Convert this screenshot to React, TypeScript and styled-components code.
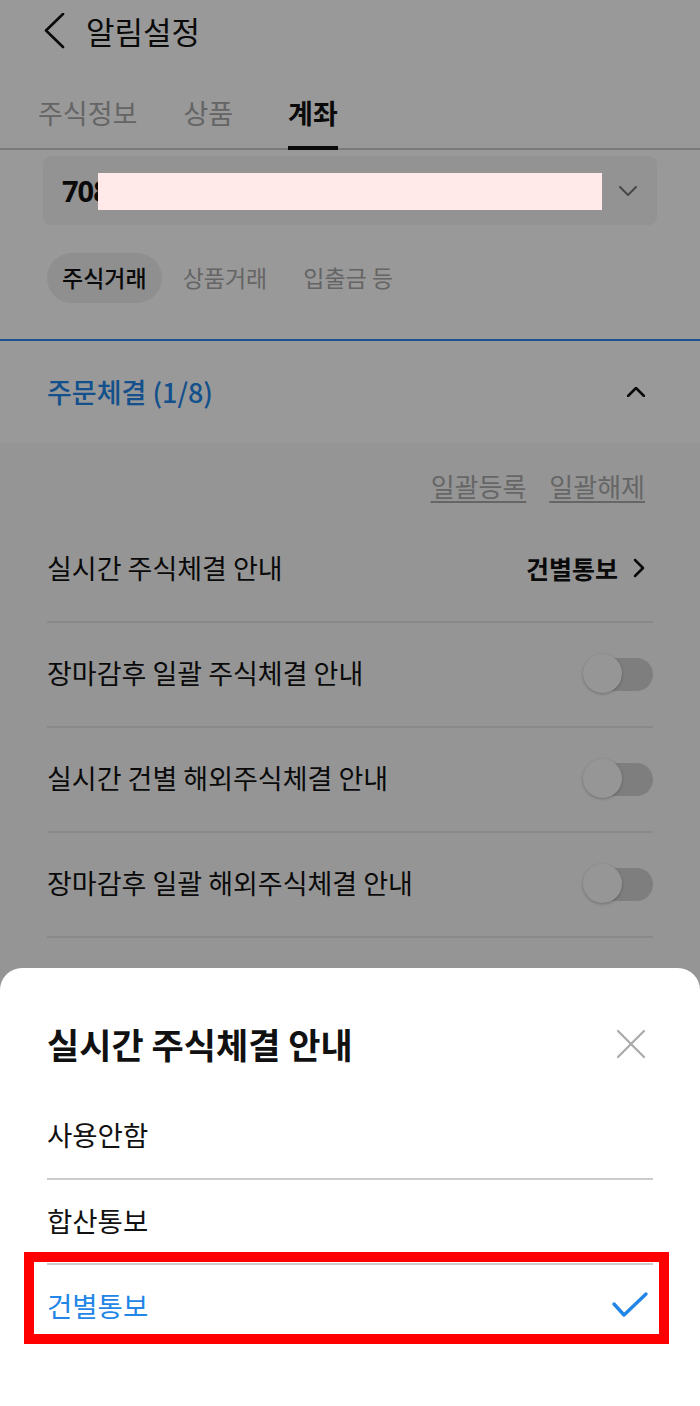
import React from "react";
import styled, { createGlobalStyle } from "styled-components";

const Global = createGlobalStyle`
  html, body { margin: 0; padding: 0; background: #ffffff; }
  body { font-family: "Noto Sans CJK KR", "Noto Sans", sans-serif; color: #111; }
  * { box-sizing: border-box; }
`;

const Page = styled.div`
  position: relative;
  width: 700px;
  height: 1406px;
  overflow: hidden;
  background: #ffffff;
`;

const Header = styled.header`
  display: flex;
  align-items: center;
  gap: 20px;
  height: 66px;
  padding: 0 0 4px 44px;
`;

const Title = styled.h1`
  margin: 0;
  font-size: 31px;
  font-weight: 400;
  line-height: 40px;
  color: #111;
`;

const TabBar = styled.nav`
  display: flex;
  align-items: flex-end;
  height: 84px;
  padding-left: 38px;
  box-shadow: inset 0 -2px 0 #cccccc;
`;

const Tab = styled.div<{ $active?: boolean; $gap: number }>`
  margin-left: ${(p) => p.$gap}px;
  font-size: 27px;
  line-height: 36px;
  padding-bottom: 15px;
  font-weight: ${(p) => (p.$active ? 700 : 400)};
  color: ${(p) => (p.$active ? "#111" : "#a8a8a8")};
  border-bottom: 4px solid ${(p) => (p.$active ? "#111" : "transparent")};
`;

const Select = styled.div`
  margin: 6px 43px 0;
  height: 69px;
  border-radius: 8px;
  background: #f5f5f5;
  display: flex;
  align-items: center;
  justify-content: space-between;
  padding: 0 20px 0 19px;
`;

const AccountNo = styled.span`
  font-family: "Noto Sans", "Noto Sans CJK KR", sans-serif;
  font-weight: 700;
  font-size: 29px;
  letter-spacing: -1px;
  color: #111;
`;

const ChipRow = styled.div`
  display: flex;
  gap: 6px;
  margin: 28px 47px 0;
`;

const Chip = styled.div<{ $active?: boolean }>`
  height: 50px;
  padding: 0 15px 3px;
  border-radius: 25px;
  display: flex;
  align-items: center;
  font-size: 23px;
  font-weight: ${(p) => (p.$active ? 500 : 400)};
  color: ${(p) => (p.$active ? "#111" : "#a8a8a8")};
  background: ${(p) => (p.$active ? "#eeeeee" : "transparent")};
`;

const SectionHeader = styled.div`
  margin-top: 36px;
  border-top: 2px solid #2f86ee;
  height: 104px;
  display: flex;
  align-items: center;
  justify-content: space-between;
  padding: 0 55px 0 47px;
`;

const SectionTitle = styled.span`
  font-size: 27px;
  font-weight: 500;
  color: #2186ea;
  padding-bottom: 2px;
`;

const SectionBody = styled.div`
  background: #f8f8f8;
  padding: 0 47px;
  min-height: 600px;
`;

const LinkRow = styled.div`
  display: flex;
  justify-content: flex-end;
  gap: 23px;
  padding: 26px 8px 0 0;
  height: 75px;
`;

const TextLink = styled.span`
  font-size: 26px;
  line-height: 34px;
  color: #ababab;
  text-decoration: underline;
  text-underline-offset: 4px;
  text-decoration-thickness: 1.5px;
`;

const Row = styled.div`
  height: 105px;
  display: flex;
  align-items: center;
  justify-content: space-between;
  padding-bottom: 4px;
  border-bottom: 2px solid #e4e4e4;
`;

const RowLabel = styled.span`
  font-size: 27px;
  color: #111;
`;

const RowValue = styled.span`
  display: flex;
  align-items: center;
  gap: 15px;
  padding-right: 8px;
  font-size: 25px;
  font-weight: 700;
  color: #111;
`;

const Toggle = styled.div`
  position: relative;
  width: 70px;
  height: 40px;
  margin-top: 2px;
`;

const Track = styled.div`
  position: absolute;
  right: 0;
  top: 4px;
  width: 56px;
  height: 33px;
  border-radius: 17px;
  background: #d2d2d2;
`;

const Knob = styled.div`
  position: absolute;
  left: 0;
  top: 0;
  width: 39px;
  height: 39px;
  border-radius: 50%;
  background: #fbfbfb;
  box-shadow: 0 1px 3px rgba(0, 0, 0, 0.25);
`;

const Dim = styled.div`
  position: absolute;
  inset: 0;
  background: rgba(0, 0, 0, 0.4);
`;

const Redaction = styled.div`
  position: absolute;
  left: 98px;
  top: 173px;
  width: 504px;
  height: 37px;
  background: #ffe9e9;
`;

const Sheet = styled.div`
  position: absolute;
  left: 0;
  right: 0;
  bottom: 0;
  height: 438px;
  background: #ffffff;
  border-radius: 22px 22px 0 0;
  padding: 54px 47px 0;
`;

const SheetHead = styled.div`
  display: flex;
  align-items: center;
  justify-content: space-between;
  height: 44px;
  margin-bottom: 27px;
`;

const SheetTitle = styled.h2`
  margin: 0;
  font-size: 35px;
  font-weight: 700;
  line-height: 44px;
  color: #111;
`;

const Option = styled.div<{ $selected?: boolean; $divider?: boolean }>`
  height: 85px;
  display: flex;
  align-items: center;
  justify-content: space-between;
  padding-bottom: 4px;
  border-top: ${(p) => (p.$divider ? "2px solid #cccccc" : "none")};
  font-size: 27.5px;
  color: ${(p) => (p.$selected ? "#2186e6" : "#111")};
`;

const Highlight = styled.div`
  position: absolute;
  left: 24px;
  top: 1252px;
  width: 645px;
  height: 92px;
  border: 10px solid #ff0000;
`;

const Icon = styled.svg`
  display: block;
  flex: none;
`;

const rows = [
  { label: "장마감후 일괄 주식체결 안내" },
  { label: "실시간 건별 해외주식체결 안내" },
  { label: "장마감후 일괄 해외주식체결 안내" },
  { label: "실시간 주식잔고 안내" },
];

export default function App() {
  return (
    <Page>
      <Global />
      <Header>
        <Icon width="22" height="36" viewBox="0 0 22 36">
          <polyline points="19,1 2,17.5 19,34" fill="none" stroke="#111" strokeWidth="2.6" strokeLinecap="round" strokeLinejoin="round" />
        </Icon>
        <Title>알림설정</Title>
      </Header>
      <TabBar>
        <Tab $gap={0}>주식정보</Tab>
        <Tab $gap={46}>상품</Tab>
        <Tab $gap={55} $active>계좌</Tab>
      </TabBar>
      <Select>
        <AccountNo>708</AccountNo>
        <Icon width="18" height="10" viewBox="0 0 18 10">
          <polyline points="1,1 9,9 17,1" fill="none" stroke="#777" strokeWidth="2" strokeLinecap="round" strokeLinejoin="round" />
        </Icon>
      </Select>
      <ChipRow>
        <Chip $active>주식거래</Chip>
        <Chip>상품거래</Chip>
        <Chip>입출금 등</Chip>
      </ChipRow>
      <SectionHeader>
        <SectionTitle>주문체결 (1/8)</SectionTitle>
        <Icon width="18" height="10" viewBox="0 0 18 10">
          <polyline points="1,9 9,1 17,9" fill="none" stroke="#111" strokeWidth="2.5" strokeLinecap="round" strokeLinejoin="round" />
        </Icon>
      </SectionHeader>
      <SectionBody>
        <LinkRow>
          <TextLink>일괄등록</TextLink>
          <TextLink>일괄해제</TextLink>
        </LinkRow>
        <Row>
          <RowLabel>실시간 주식체결 안내</RowLabel>
          <RowValue>
            건별통보
            <Icon width="12" height="20" viewBox="0 0 12 20">
              <polyline points="2,2 10,10 2,18" fill="none" stroke="#111" strokeWidth="2.5" strokeLinecap="round" strokeLinejoin="round" />
            </Icon>
          </RowValue>
        </Row>
        {rows.map((r) => (
          <Row key={r.label}>
            <RowLabel>{r.label}</RowLabel>
            <Toggle>
              <Track />
              <Knob />
            </Toggle>
          </Row>
        ))}
      </SectionBody>
      <Dim />
      <Redaction />
      <Sheet>
        <SheetHead>
          <SheetTitle>실시간 주식체결 안내</SheetTitle>
          <Icon width="30" height="30" viewBox="0 0 30 30" style={{ marginRight: 7 }}>
            <path d="M2 2 L28 28 M28 2 L2 28" stroke="#a9a9a9" strokeWidth="2.2" strokeLinecap="round" />
          </Icon>
        </SheetHead>
        <Option>사용안함</Option>
        <Option $divider>합산통보</Option>
        <Option $divider $selected>
          건별통보
          <Icon width="38" height="28" viewBox="0 0 38 28" style={{ marginRight: 4 }}>
            <polyline points="3,13 13,24 35,3" fill="none" stroke="#2186e6" strokeWidth="3.4" strokeLinecap="round" strokeLinejoin="round" />
          </Icon>
        </Option>
      </Sheet>
      <Highlight />
    </Page>
  );
}
